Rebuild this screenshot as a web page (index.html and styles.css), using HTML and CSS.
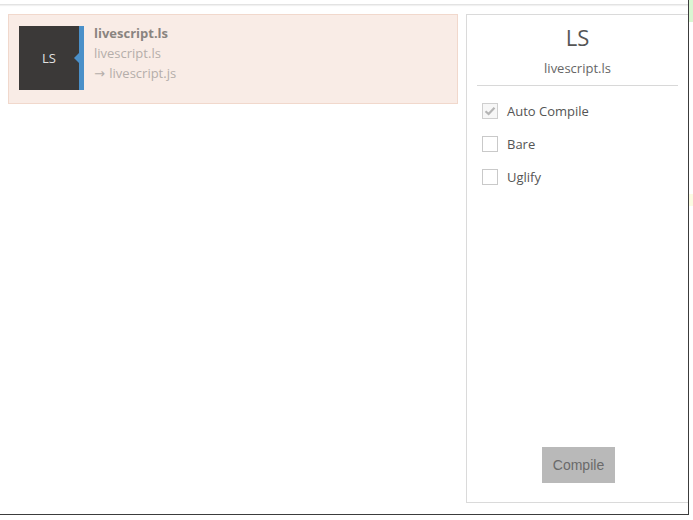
FILE: index.html
```html
<!DOCTYPE html>
<html>
<head>
<meta charset="utf-8">
<link rel="stylesheet" href="styles.css">
</head>
<body>
<div class="screen">
  <div class="window">
    <div class="topbar"></div>
    <div class="content">
      <div class="files">
        <div class="file-card">
          <div class="file-icon">
            <div class="file-icon-box">LS</div>
            <div class="file-icon-bar"></div>
            <div class="file-icon-notch"></div>
          </div>
          <div class="file-text">
            <div class="file-name">livescript.ls</div>
            <div class="file-path">livescript.ls</div>
            <div class="file-path"><span class="arrow">→</span> livescript.js</div>
          </div>
        </div>
      </div>
      <div class="panel">
        <div class="panel-title">LS</div>
        <div class="panel-sub">livescript.ls</div>
        <div class="panel-rule"></div>
        <div class="options">
          <label class="option">
            <span class="box checked">
              <svg width="12" height="10" viewBox="0 0 12 10"><path d="M1.5 5.2 L4.6 8 L10.5 1.8" fill="none" stroke="#b5b5b5" stroke-width="2.2"/></svg>
            </span>
            <span class="option-label">Auto Compile</span>
          </label>
          <label class="option">
            <span class="box"></span>
            <span class="option-label">Bare</span>
          </label>
          <label class="option">
            <span class="box"></span>
            <span class="option-label">Uglify</span>
          </label>
        </div>
        <div class="panel-footer">
          <button class="compile">Compile</button>
        </div>
      </div>
    </div>
  </div>
  <div class="side">
    <div class="side-green"></div>
    <div class="side-yellow"></div>
  </div>
</div>
</body>
</html>
```
FILE: styles.css
```css
html, body {
  margin: 0;
  padding: 0;
  background: #fff;
}
.screen {
  display: flex;
  width: 693px;
  height: 520px;
  font-family: "Open Sans", "Noto Sans", sans-serif;
}
.window {
  width: 688px;
  height: 514px;
  border-right: 1px solid #3c3c3c;
  border-bottom: 1px solid #3c3c3c;
  display: flex;
  flex-direction: column;
  overflow: hidden;
}
.topbar {
  height: 4px;
  border-bottom: 1px solid #e3e3e3;
  box-shadow: 0 1px 1px #f1f1f1;
  flex: none;
}
.content {
  flex: 1;
  display: flex;
  gap: 8px;
  padding: 9px 0 11px 8px;
  min-height: 0;
}
.files {
  width: 450px;
  flex: none;
}
.file-card {
  box-sizing: border-box;
  height: 90px;
  border: 1px solid #f1d8cc;
  background: #f9ece6;
  display: flex;
  align-items: flex-start;
  padding: 8px 10px 0 10px;
}
.file-icon {
  position: relative;
  display: flex;
  margin-top: 3px;
  flex: none;
}
.file-icon-box {
  width: 60px;
  height: 64px;
  background: #3b3938;
  color: #e2e2e2;
  font-size: 13px;
  display: flex;
  align-items: center;
  justify-content: center;
}
.file-icon-bar {
  width: 5px;
  height: 64px;
  background: #4a90c9;
}
.file-icon-notch {
  position: absolute;
  left: 55px;
  top: 27px;
  width: 0;
  height: 0;
  border-top: 5px solid transparent;
  border-bottom: 5px solid transparent;
  border-right: 5px solid #4a90c9;
}
.file-text {
  margin-left: 10px;
  font-size: 13px;
  line-height: 20px;
}
.file-name {
  font-weight: 700;
  color: #8a8480;
}
.file-path {
  color: #b5aeaa;
}
.arrow {
  font-family: "DejaVu Sans", sans-serif;
  font-size: 13px;
  margin-right: 1px;
}
.panel {
  flex: 1;
  border: 1px solid #dadada;
  border-right: none;
  display: flex;
  flex-direction: column;
  align-items: stretch;
  padding: 0 10px;
}
.panel-title {
  text-align: center;
  font-size: 22px;
  color: #555;
  margin-top: 8px;
  line-height: 28px;
}
.panel-sub {
  text-align: center;
  font-size: 13px;
  color: #666;
  margin-top: 8px;
  line-height: 18px;
}
.panel-rule {
  height: 1px;
  background: #d8d8d8;
  margin-top: 8px;
}
.options {
  display: flex;
  flex-direction: column;
  gap: 17px;
  padding: 17px 0 0 5px;
}
.option {
  display: flex;
  align-items: center;
  height: 16px;
}
.box {
  box-sizing: border-box;
  width: 16px;
  height: 16px;
  border: 1px solid #c9c9c9;
  background: #fff;
  display: flex;
  align-items: center;
  justify-content: center;
}
.box.checked {
  border-color: #cfcfcf;
  background: #f7f7f7;
}
.option-label {
  margin-left: 9px;
  font-size: 13px;
  color: #555;
}
.panel-footer {
  margin-top: auto;
  display: flex;
  justify-content: center;
  padding: 0 0 19px 2px;
}
.compile {
  width: 73px;
  height: 36px;
  border: none;
  background: #b9b9b9;
  color: #6a6a6a;
  font-family: "Liberation Sans", Arial, sans-serif;
  font-size: 14px;
  padding: 0;
}
.side {
  width: 4px;
  display: flex;
  flex-direction: column;
}
.side-green {
  height: 22px;
  background: #d9f6d2;
}
.side-yellow {
  margin-top: 172px;
  height: 12px;
  background: #fbfbe2;
}
```
